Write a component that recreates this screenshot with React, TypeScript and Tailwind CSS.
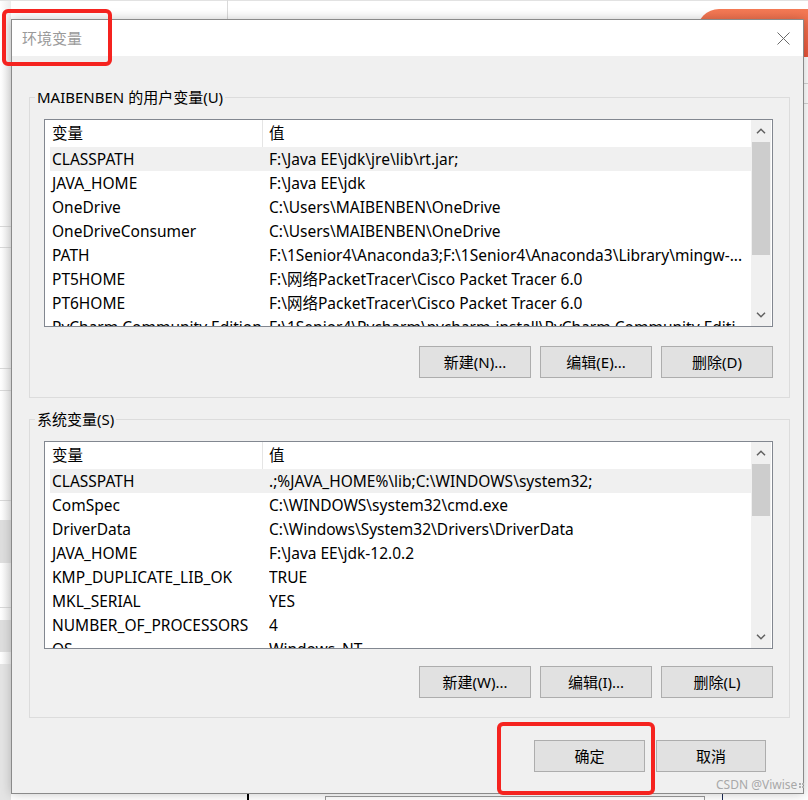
import React from 'react';

type Row = [string, string];

const userVars: Row[] = [
  ['CLASSPATH', 'F:\\Java EE\\jdk\\jre\\lib\\rt.jar;'],
  ['JAVA_HOME', 'F:\\Java EE\\jdk'],
  ['OneDrive', 'C:\\Users\\MAIBENBEN\\OneDrive'],
  ['OneDriveConsumer', 'C:\\Users\\MAIBENBEN\\OneDrive'],
  ['PATH', 'F:\\1Senior4\\Anaconda3;F:\\1Senior4\\Anaconda3\\Library\\mingw-...'],
  ['PT5HOME', 'F:\\网络PacketTracer\\Cisco Packet Tracer 6.0'],
  ['PT6HOME', 'F:\\网络PacketTracer\\Cisco Packet Tracer 6.0'],
  ['PyCharm Community Edition', 'F:\\1Senior4\\Pycharm\\pycharm-install\\PyCharm Community Editi'],
];

const systemVars: Row[] = [
  ['CLASSPATH', '.;%JAVA_HOME%\\lib;C:\\WINDOWS\\system32;'],
  ['ComSpec', 'C:\\WINDOWS\\system32\\cmd.exe'],
  ['DriverData', 'C:\\Windows\\System32\\Drivers\\DriverData'],
  ['JAVA_HOME', 'F:\\Java EE\\jdk-12.0.2'],
  ['KMP_DUPLICATE_LIB_OK', 'TRUE'],
  ['MKL_SERIAL', 'YES'],
  ['NUMBER_OF_PROCESSORS', '4'],
  ['OS', 'Windows_NT'],
];

function Chevron({ up }: { up?: boolean }) {
  return (
    <svg width="10" height="6" viewBox="0 0 10 6" fill="none">
      <path
        d={up ? 'M1 5.2L5 1.2L9 5.2' : 'M1 0.8L5 4.8L9 0.8'}
        stroke="#606060"
        strokeWidth="1.5"
      />
    </svg>
  );
}

function ScrollBar({ thumb }: { thumb: number }) {
  return (
    <div className="mr-[1px] flex w-[20px] shrink-0 flex-col bg-[#f0f0f0]">
      <div className="flex h-[22px] shrink-0 items-center justify-center">
        <Chevron up />
      </div>
      <div className="flex-1">
        <div className="mx-[1px] bg-[#cdcdcd]" style={{ height: thumb }} />
      </div>
      <div className="flex h-[22px] shrink-0 items-center justify-center">
        <Chevron />
      </div>
    </div>
  );
}

function ListView({ rows, thumb }: { rows: Row[]; thumb: number }) {
  return (
    <div className="flex h-[208px] w-[729px] border border-[#828790] bg-white text-[15.5px]">
      <div className="flex min-w-0 flex-1 flex-col overflow-hidden">
        <div className="flex h-[27px] shrink-0 items-center">
          <div className="flex h-full w-[218px] shrink-0 items-center border-r border-[#e5e5e5] pl-[7px]">变量</div>
          <div className="pl-[6px]">值</div>
        </div>
        {rows.map((r, i) => (
          <div
            key={r[0]}
            className={`ml-[5px] flex h-[24px] shrink-0 items-center pt-[2px] ${i === 0 ? 'bg-[#f0f0f0]' : ''}`}
          >
            <div className="w-[219px] shrink-0 overflow-hidden whitespace-nowrap pl-[2px]">{r[0]}</div>
            <div className="min-w-0 flex-1 overflow-hidden whitespace-nowrap">{r[1]}</div>
          </div>
        ))}
      </div>
      <ScrollBar thumb={thumb} />
    </div>
  );
}

function WinButton({ children, w = 'w-[112px]' }: { children: React.ReactNode; w?: string }) {
  return (
    <button className={`flex h-[32px] ${w} items-center justify-center border border-[#adadad] bg-[#e1e1e1] text-[15px] text-black`}>
      {children}
    </button>
  );
}

function Group({
  title,
  rows,
  thumb,
  buttons,
  className,
  gap,
}: {
  title: string;
  rows: Row[];
  thumb: number;
  buttons: string[];
  className: string;
  gap: string;
}) {
  return (
    <fieldset className={`w-[761px] border border-[#dcdcdc] pb-[19px] ${className}`}>
      <legend className="ml-[5px] px-[2px] text-[15px] leading-[20px]">{title}</legend>
      <div className="ml-[14px] mt-[12px]">
        <ListView rows={rows} thumb={thumb} />
      </div>
      <div className={`${gap} flex justify-end gap-[9px] pr-[16px]`}>
        {buttons.map((b) => (
          <WinButton key={b}>{b}</WinButton>
        ))}
      </div>
    </fieldset>
  );
}

export default function App() {
  return (
    <div className="relative h-[800px] w-[808px] overflow-hidden bg-white font-['Noto_Sans','Noto_Sans_CJK_SC',sans-serif] text-[15px] text-black">
      {/* window behind, left edge */}
      <div className="absolute left-0 top-0 h-full w-[11px] bg-gradient-to-r from-white to-[#ececec]">
        <div className="absolute left-0 top-[226px] h-px w-full bg-[#d8d8d8]" />
        <div className="absolute left-0 top-[247px] h-px w-full bg-[#d8d8d8]" />
        <div className="absolute left-0 top-[368px] h-px w-full bg-[#d8d8d8]" />
        <div className="absolute left-0 top-[390px] h-px w-full bg-[#d8d8d8]" />
        <div className="absolute left-0 top-[500px] h-px w-full bg-[#d8d8d8]" />
        <div className="absolute left-0 top-[520px] h-[43px] w-full bg-[#dedede]" />
        <div className="absolute left-0 top-[607px] h-px w-full bg-[#d8d8d8]" />
        <div className="absolute left-0 top-[620px] h-[32px] w-full bg-[#dedede]" />
        <div className="absolute left-0 top-[664px] h-[136px] w-full bg-[#e4e4e4]" />
      </div>
      <div className="absolute left-0 top-0 h-px w-full bg-[#e2e2e2]" />
      <div className="absolute left-[227px] top-0 h-[19px] w-px bg-[#dadada]" />
      {/* orange pill behind, top right */}
      <div className="absolute left-[697px] top-[9px] h-[48px] w-[120px] rounded-l-[22px] bg-gradient-to-b from-[#f47a55] to-[#e8533a]" />
      <div className="absolute right-0 top-[83px] h-px w-[5px] bg-[#d5d5d5]" />
      <div className="absolute right-0 top-[103px] h-px w-[5px] bg-[#d5d5d5]" />
      {/* bottom strip behind */}
      <div className="absolute left-[247px] top-[794px] h-[6px] w-[2px] bg-black" />
      <div className="absolute left-[325px] top-[796px] h-[10px] w-[380px] border border-[#9a9a9a] bg-white" />
      <div className="absolute left-[722px] top-[794px] h-[6px] w-[1px] bg-[#1b2a55]" />

      {/* dialog */}
      <div className="absolute left-[11px] top-[19px] flex h-[775px] w-[793px] flex-col border border-[#8a8a8a] bg-[#f0f0f0] shadow-[0_0_10px_rgba(0,0,0,0.22)]">
        <div className="flex h-[36px] shrink-0 items-center justify-between bg-white pl-[10px] pr-[13px]">
          <span className="text-[15px] text-[#9a9a9a]">环境变量</span>
          <svg width="13" height="13" viewBox="0 0 13 13" fill="none">
            <path d="M0.5 0.5L12.5 12.5M12.5 0.5L0.5 12.5" stroke="#6a6a6a" strokeWidth="1" />
          </svg>
        </div>
        <div className="flex flex-col pl-[17px]">
          <Group
            className="mt-[31px]"
            gap="mt-[19px]"
            title="MAIBENBEN 的用户变量(U)"
            rows={userVars}
            thumb={113}
            buttons={['新建(N)...', '编辑(E)...', '删除(D)']}
          />
          <Group
            className="mt-[11px]"
            gap="mt-[17px]"
            title="系统变量(S)"
            rows={systemVars}
            thumb={52}
            buttons={['新建(W)...', '编辑(I)...', '删除(L)']}
          />
          <div className="mt-[22px] flex justify-end gap-[11px] pr-[37px]">
            <WinButton w="w-[111px]">确定</WinButton>
            <WinButton w="w-[110px]">取消</WinButton>
          </div>
        </div>
      </div>

      {/* watermark */}
      <div className="absolute left-[716px] top-[778px] flex items-center gap-[2px] text-[12px] leading-[14px] text-[#a8a8a8]">
        <span>CSDN @Viwise</span>
        <span className="grid grid-cols-2 gap-[1px]">
          <span className="h-[2px] w-[2px] bg-[#b0b0b0]" />
          <span className="h-[2px] w-[2px] bg-[#b0b0b0]" />
          <span className="h-[2px] w-[2px] bg-[#b0b0b0]" />
          <span className="h-[2px] w-[2px] bg-[#b0b0b0]" />
        </span>
      </div>

      {/* red highlight boxes */}
      <div className="absolute left-[2px] top-[9px] h-[57px] w-[110px] rounded-[6px] border-[4px] border-[#f5231f]" />
      <div className="absolute left-[497px] top-[722px] h-[73px] w-[158px] rounded-[6px] border-[4px] border-[#f5231f]" />
    </div>
  );
}
